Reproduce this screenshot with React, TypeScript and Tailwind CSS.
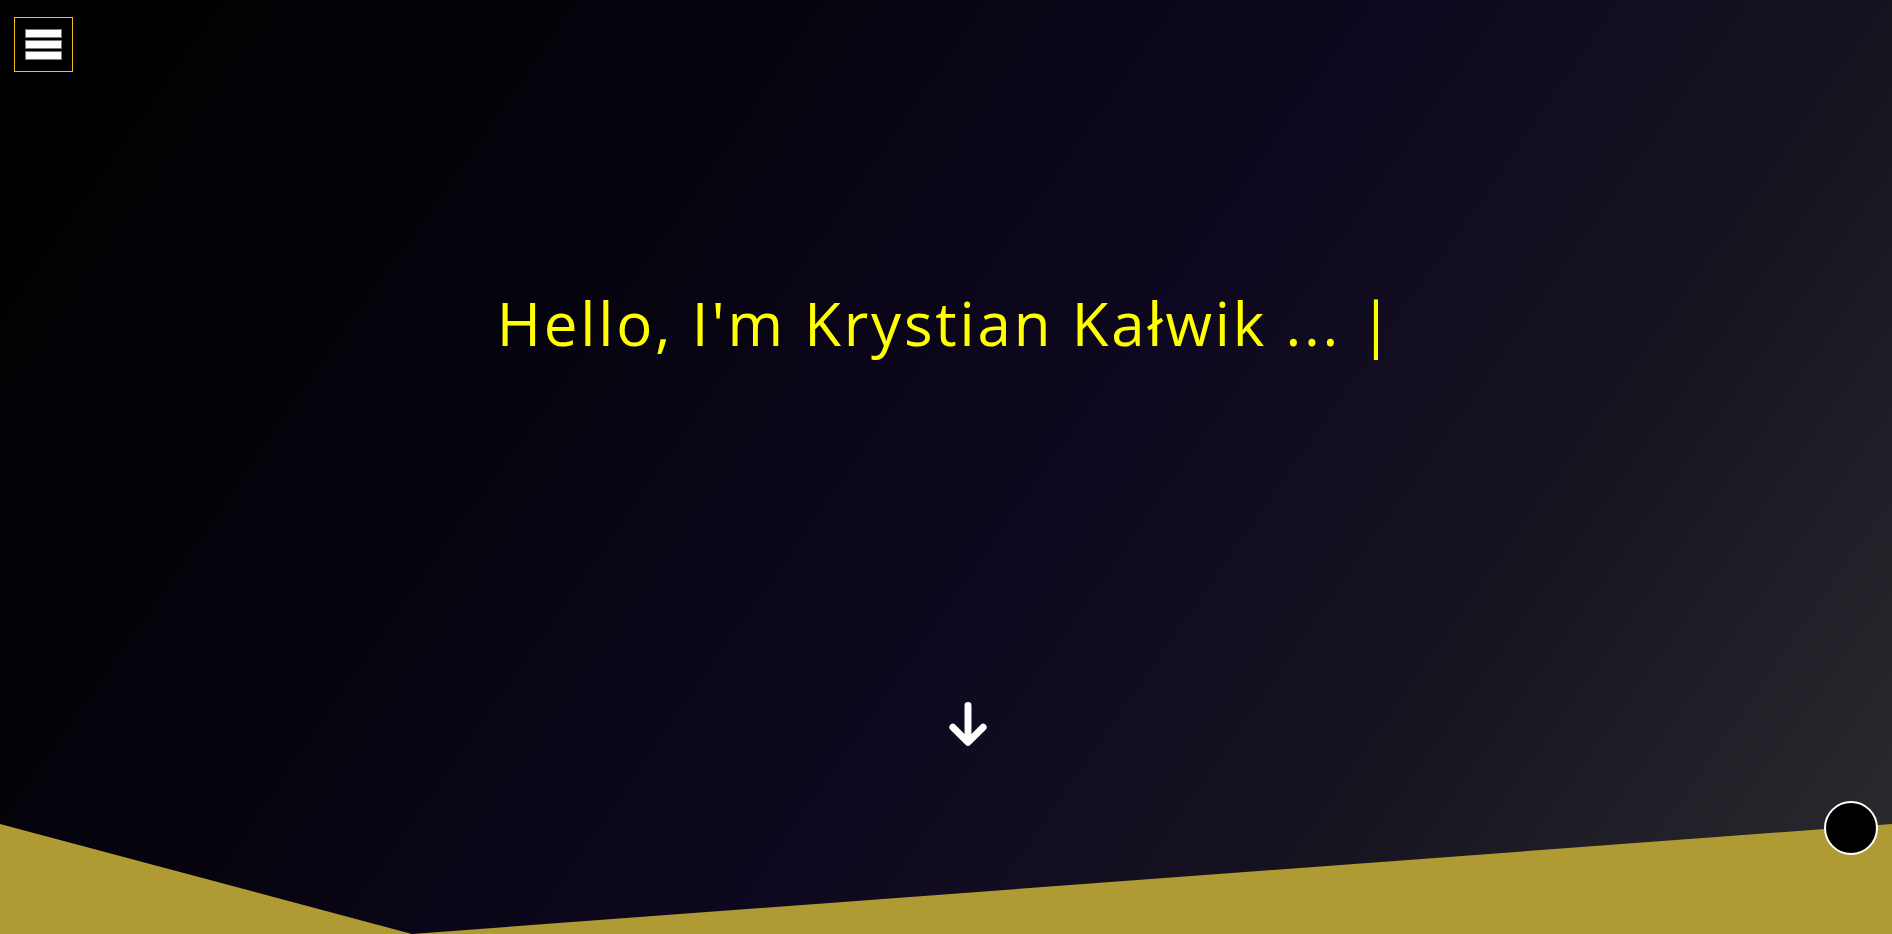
export default function App() {
  return (
    <div className="relative h-[934px] w-full overflow-hidden bg-[linear-gradient(125deg,#000000_0%,#05030c_28%,#0e0820_55%,#16131f_75%,#2c2c30_100%)] font-['Open_Sans',sans-serif]">
      <button className="absolute left-[14px] top-[17px] flex h-[55px] w-[59px] flex-col items-center justify-center gap-[4px] border border-[#f2c11a]">
        <span className="block h-[7px] w-[35px] bg-white shadow-[0_0_0_1px_#777]" />
        <span className="block h-[7px] w-[35px] bg-white shadow-[0_0_0_1px_#777]" />
        <span className="block h-[7px] w-[35px] bg-white shadow-[0_0_0_1px_#777]" />
      </button>

      <div className="flex flex-col items-center pt-[283px]">
        <h1 className="text-[60px] leading-[80px] tracking-[0.047em] text-[#ffff00] font-medium">
          Hello, I'm Krystian Kałwik ... |
        </h1>
        <div className="mt-[335px] ml-[44px]">
          <svg width="52" height="52" viewBox="0 0 24 24" fill="none" stroke="white" strokeWidth="3.2" strokeLinecap="round" strokeLinejoin="round">
            <line x1="12" y1="3.5" x2="12" y2="20" />
            <polyline points="5 13.5 12 20.5 19 13.5" />
          </svg>
        </div>
      </div>

      <svg className="absolute bottom-0 left-0 h-[110px] w-full" viewBox="0 0 1892 110" preserveAspectRatio="none">
        <polygon points="0,0 412,110 1892,0 1892,110 0,110" fill="#b09a33" />
      </svg>

      <button className="absolute left-[1824px] top-[801px] h-[54px] w-[54px] rounded-full border-[2px] border-white bg-black" />
    </div>
  );
}
